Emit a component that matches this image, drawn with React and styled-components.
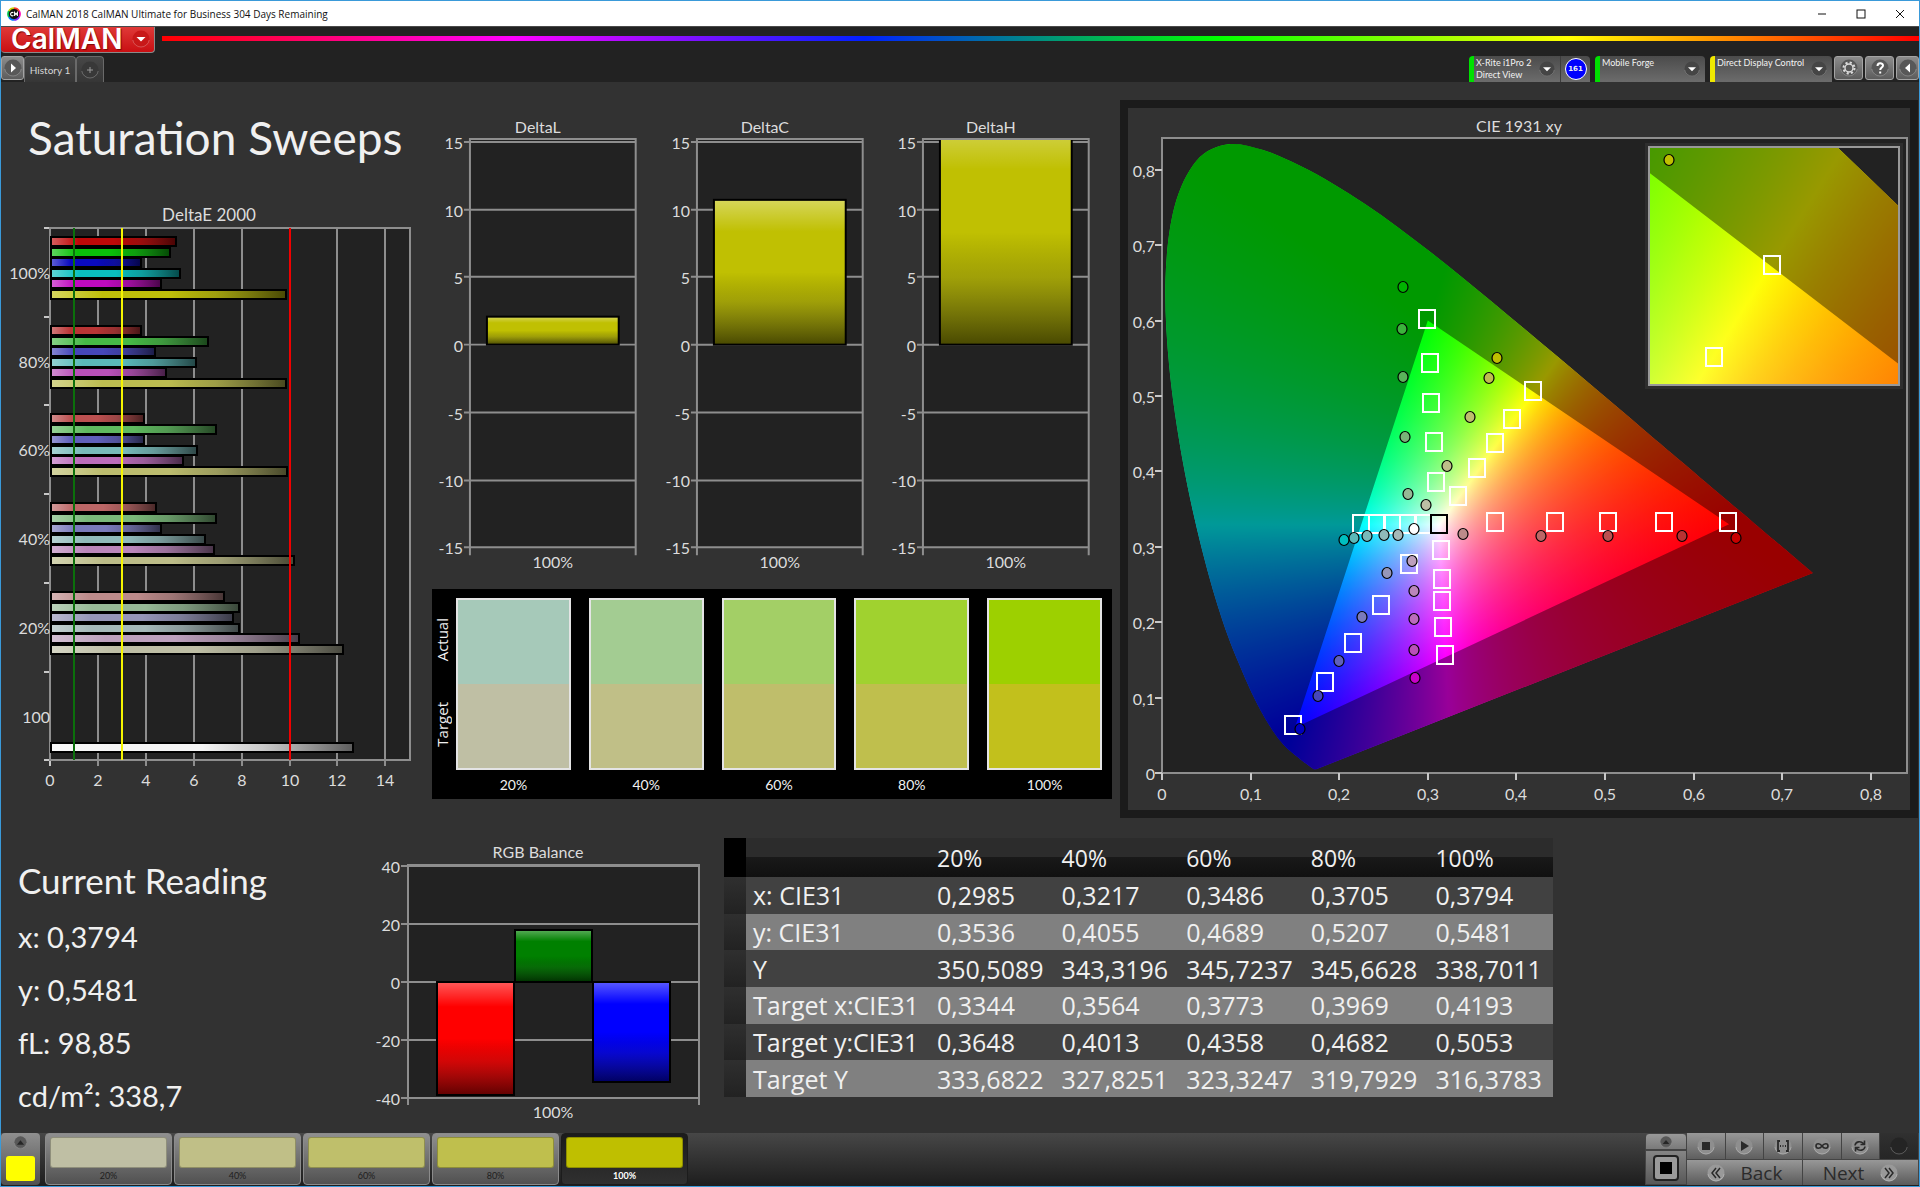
import styled, { createGlobalStyle } from 'styled-components';

const GlobalStyle = createGlobalStyle`
  * {
    box-sizing: border-box;
  }

  body {
    margin: 0;
    background: #323232;
    color: #f0f0f0;
    font-family: Lato, "Liberation Sans", sans-serif;
  }

  button {
    margin: 0;
    padding: 0;
    border: none;
    font-family: inherit;
    color: inherit;
  }
`;

const Window = styled.div`
  min-height: 100vh;
  display: flex;
  flex-direction: column;
  border: 1px solid #3a9ad9;
  background: #323232;
`;

/* ---------- title bar ---------- */

const TitleBar = styled.header`
  height: 25px;
  padding-left: 6px;
  display: flex;
  align-items: center;
  background: #ffffff;
  color: #111111;

  h1 {
    margin: 0 0 0 5px;
    flex: 1;
    font: 10px "Open Sans", "Noto Sans", sans-serif;
  }
`;

const WindowButton = styled.button`
  width: 39px;
  height: 24px;
  background: none;
  display: grid;
  place-items: center;
`;

/* ---------- application header ---------- */

const AppHeader = styled.div`
  height: 56px;
  background: #222222;
  border-top: 1px solid #4a4a4a;
`;

const BrandRow = styled.div`
  height: 29px;
  display: flex;
  gap: 7px;
`;

const BrandButton = styled.button`
  width: 154px;
  height: 26px;
  padding: 0 4px 2px 10px;
  display: flex;
  align-items: center;
  justify-content: space-between;
  border-bottom: 1px solid #8a8a8a;
  border-right: 1px solid #8a8a8a;
  border-radius: 0 0 4px 4px;
  background: linear-gradient(#e03a38, #c90f12);
  color: #ffffff;
  font: 600 28px/22px Inter, sans-serif;
  text-shadow: 1px 1px 1px #7a0808;
`;

const Spectrum = styled.div`
  flex: 1;
  height: 5px;
  margin-top: 9px;
  background: linear-gradient(
    to right,
    #ff0000, #ff00ff 20%, #0020ff 40%, #00ff00 60%, #ffff00 80%, #ff0000
  );
`;

const TabRow = styled.div`
  height: 26px;
  display: flex;
  justify-content: space-between;
`;

const TabGroup = styled.div`
  display: flex;
  align-items: flex-start;
  gap: ${(props) => props.$gap}px;
`;

const Tab = styled.button`
  height: 26px;
  width: ${(props) => props.$width}px;
  display: grid;
  place-items: center;
  border: 1px solid #6a6a6a;
  border-bottom: none;
  border-radius: 4px 4px 0 0;
  background: linear-gradient(#474747, #363636);
  color: #d6d6d6;
  font-size: 10px;
`;

const ToolButton = styled.button`
  width: ${(props) => props.$width}px;
  height: 24px;
  display: grid;
  place-items: center;
  border: 1px solid #a4a4a4;
  border-radius: 3px;
  background: linear-gradient(#8c8c8c, #5c5c5c);
`;

const DeviceTab = styled.div`
  height: 26px;
  width: ${(props) => props.$width}px;
  display: flex;
  border-left: 5px solid ${(props) => props.$status};
  border-radius: 4px 4px 0 0;
  background: linear-gradient(#4b4b4b, #6c6c6c);

  & + & {
    margin-left: 3px;
  }
`;

const DeviceButton = styled.button`
  flex: 1;
  padding: 1px 5px 0 2px;
  display: flex;
  justify-content: space-between;
  background: none;
  color: #f2f2f2;
  font-size: 9px;
  line-height: 12px;
  text-align: left;
  white-space: nowrap;

  svg {
    margin-top: 4px;
  }
`;

const ReadingCount = styled.span`
  width: 30px;
  display: grid;
  place-items: center;
  border-left: 1px solid #3c3c3c;

  b {
    width: 22px;
    height: 22px;
    border: 1px solid #ffffff;
    border-radius: 50%;
    background: #0000ff;
    font: bold 7px/20px "DejaVu Sans", sans-serif;
    text-align: center;
  }
`;

/* ---------- workspace ---------- */

const Workspace = styled.main`
  flex: 1;
  padding-top: 18px;
`;

const UpperRow = styled.div`
  display: grid;
  grid-template-columns: 431fr 680fr 807fr;
`;

const LowerRow = styled.div`
  margin-top: 20px;
  display: grid;
  grid-template-columns: 370fr 353fr 829fr 366fr;
`;

const PageTitle = styled.h2`
  margin: 0;
  padding: 7px 0 0 27px;
  height: 98px;
  font-size: 46px;
  line-height: 62px;
  font-weight: normal;
`;

const Chart = styled.svg`
  display: block;
  width: 100%;
  height: auto;
  font-family: Lato, sans-serif;
  font-size: 16px;
  fill: #dcdcdc;
`;

const DeltaCharts = styled.div`
  display: grid;
  grid-template-columns: repeat(3, 1fr);
`;

const SwatchPanel = styled.section`
  padding: 9px 10px 0 0;
  display: flex;
  background: #000000;
`;

const SwatchAxis = styled.div`
  width: 24px;
  height: 172px;
  padding: 0 4px 4px 0;
  display: flex;
  flex-direction: column;
  justify-content: space-around;
  align-items: center;
  font: 15px/18px "Open Sans", "Noto Sans", sans-serif;

  span {
    writing-mode: vertical-rl;
    transform: rotate(180deg);
  }
`;

const SwatchList = styled.div`
  flex: 1;
  display: grid;
  grid-template-columns: repeat(5, 1fr);
  gap: 18px;
`;

const SwatchFigure = styled.figure`
  margin: 0;
  text-align: center;
  font-size: 14px;
  line-height: 29px;
`;

const SwatchColor = styled.div`
  height: 172px;
  border: 2px solid #e4e4e4;
  background: linear-gradient(
    ${(props) => props.$actual} 50%,
    ${(props) => props.$target} 50%
  );
`;

const CiePanel = styled.section`
  margin: 0 1px 0 8px;
  border: 8px solid #1b1b1b;
`;

const GamutField = styled.div`
  width: 100%;
  height: 100%;
  background: ${(props) => props.$layers};
  background-blend-mode: darken;
`;

const Reading = styled.section`
  padding: 20px 0 0 17px;
  font-size: 29px;

  h3 {
    margin: 0 0 8px;
    font-size: 35px;
    line-height: 44px;
    font-weight: normal;
  }

  p {
    margin: 0;
    line-height: 53px;
  }
`;

const DataTable = styled.table`
  width: 100%;
  height: 259px;
  align-self: start;
  table-layout: fixed;
  border-collapse: collapse;
  font: 25px/36px "Open Sans", "Noto Sans", sans-serif;
  white-space: nowrap;

  th,
  td {
    padding: 0 0 0 7px;
    text-align: left;
    font-weight: normal;
  }

  thead th {
    height: 39px;
    font-size: 23px;
    background: linear-gradient(#2c2c2c 48%, #191919 50%, #101010);
  }

  thead th:first-child {
    background: #000000;
  }

  tbody tr {
    background: #414141;
  }

  tbody tr:nth-child(even) {
    background: #808080;
  }

  tbody td:first-child {
    background: linear-gradient(#2f2f2f, #222222);
  }
`;

/* ---------- footer ---------- */

const Footer = styled.footer`
  height: 53px;
  display: flex;
  background: linear-gradient(#474747, #1d1d1d);
`;

const ColorPick = styled.button`
  width: 39px;
  height: 52px;
  margin-right: 5px;
  padding: 3px 5px 4px;
  display: flex;
  flex-direction: column;
  align-items: center;
  justify-content: space-between;
  border-radius: 4px;
  background: linear-gradient(#8f8f8f, #505050);

  span {
    width: 29px;
    height: 25px;
    border-radius: 3px;
    background: #ffff00;
  }
`;

const PatternList = styled.div`
  flex: 1;
  display: flex;
  gap: 2px;
`;

const PatternButton = styled.button`
  width: 127px;
  height: 52px;
  padding: 3px 4px 0;
  border-radius: 4px;
  border: 1px solid ${(props) => (props.$active ? '#1c1c1c' : '#8b8b8b')};
  background: ${(props) => (props.$active
    ? 'linear-gradient(#1b1b1b, #303030)'
    : 'linear-gradient(#8f8f8f, #515151)')};
  color: ${(props) => (props.$active ? '#ffffff' : '#1e1e1e')};
  font-size: 9px;
  line-height: 16px;
  font-weight: ${(props) => (props.$active ? 'bold' : 'normal')};
`;

const PatternColor = styled.span`
  display: block;
  height: 31px;
  border-radius: 3px;
  border: 1px solid rgba(0, 0, 0, .25);
  background: ${(props) => props.$color};
`;

const PatternWindow = styled.div`
  width: 42px;
  display: flex;
  flex-direction: column;

  button {
    display: grid;
    place-items: center;
    border: 1px solid #444444;
    background: linear-gradient(#999999, #7a7a7a);
  }

  button:first-child {
    height: 17px;
    border-radius: 4px 4px 0 0;
  }

  button:last-child {
    height: 35px;
    background: linear-gradient(#858585, #585858);
  }
`;

const Transport = styled.div`
  width: 232px;
  display: grid;
  grid-template-columns: repeat(6, 1fr);
  grid-template-rows: 27px 25px;
`;

const TransportButton = styled.button`
  display: grid;
  place-items: center;
  border-right: 1px solid #444444;
  border-bottom: 1px solid #444444;
  background: ${(props) => (props.disabled
    ? 'linear-gradient(#303030, #262626)'
    : 'linear-gradient(#989898, #5f5f5f)')};
`;

const StepButton = styled.button`
  grid-column: span 3;
  display: flex;
  align-items: center;
  justify-content: center;
  gap: 16px;
  border-right: 1px solid #444444;
  background: linear-gradient(#989898, #5a5a5a);
  color: #2b2b2b;
  font: 19px/24px "Open Sans", "Noto Sans", sans-serif;
`;

/* ---------- icons ---------- */

function AppIcon() {
  return (
    <svg width="14" height="14" viewBox="0 0 14 14" aria-hidden="true">
      <circle cx="7" cy="7" r="6" fill="#111111" />
      <g fill="none" strokeWidth="1.6">
        <path d="M7 1A6 6 0 0 1 12.2 4" stroke="#ff3b30" />
        <path d="M12.2 4A6 6 0 0 1 12.2 10" stroke="#ff00b8" />
        <path d="M12.2 10A6 6 0 0 1 7 13" stroke="#7a2bff" />
        <path d="M7 13A6 6 0 0 1 1.8 10" stroke="#007bff" />
        <path d="M1.8 10A6 6 0 0 1 1.8 4" stroke="#00c853" />
        <path d="M1.8 4A6 6 0 0 1 7 1" stroke="#c6d800" />
        <path d="M6.4 5.8A1.7 1.7 0 1 0 6.4 8.4M7.6 9V5.6L9 7.6L10.4 5.6V9" stroke="#ffffff" strokeWidth="1.1" />
      </g>
    </svg>
  );
}

function RoundIcon({ size = 18, fill = '#585858', children }) {
  return (
    <svg width={size} height={size} viewBox="0 0 18 18" aria-hidden="true">
      <circle cx="9" cy="9" r="8.5" fill={fill} />
      <path d="M.8 10A8.3 8.3 0 0 0 17.2 10" fill="none" stroke="#ffffff" strokeOpacity=".25" />
      {children}
    </svg>
  );
}

const arrowDown = <path d="M4.500 7H13.500L9 11.500Z" fill="#ffffff" />;

/* ---------- chart helpers ---------- */

const GRID = '#8e8e8e';

function BarShading() {
  return (
    <defs>
      {[['shadeAcross', 1, 0], ['shadeDown', 0, 1]].map(([id, x2, y2]) => (
        <linearGradient key={id} id={id} x1="0" y1="0" x2={x2} y2={y2}>
          <stop offset="0" stopColor="#ffffff" stopOpacity=".35" />
          <stop offset=".22" stopColor="#ffffff" stopOpacity="0" />
          <stop offset=".5" stopColor="#000000" stopOpacity="0" />
          <stop offset=".7" stopColor="#202020" stopOpacity=".2" />
          <stop offset="1" stopColor="#000000" stopOpacity=".62" />
        </linearGradient>
      ))}
    </defs>
  );
}

function Bar({ x, y, width, height, color, shade }) {
  const box = { x, y, width, height };
  return (
    <>
      <rect {...box} fill={color} />
      <rect {...box} fill={`url(#${shade})`} stroke="#000000" strokeWidth="2" />
    </>
  );
}

/* ---------- DeltaE 2000 ---------- */

const DELTA_E = [
  {
    label: '100%',
    values: [5.26, 4.99, 3.78, 5.41, 4.62, 9.87],
    colors: ['#bf0808', '#0abf0a', '#0a0abf', '#0abfbf', '#bf0abf', '#bfbf0a'],
  },
  {
    label: '80%',
    values: [3.78, 6.58, 4.38, 6.08, 4.85, 9.87],
    colors: ['#b93535', '#46b946', '#4646b9', '#5ab9b9', '#b950b9', '#bcbc50'],
  },
  {
    label: '60%',
    values: [3.92, 6.92, 3.92, 6.12, 5.54, 9.90],
    colors: ['#bc5050', '#5fb95f', '#6060bb', '#78baba', '#bb6cbb', '#bcbc6e'],
  },
  {
    label: '40%',
    values: [4.42, 6.92, 4.62, 6.47, 6.85, 10.20],
    colors: ['#bc6666', '#7ab97a', '#7a7abb', '#90baba', '#bb86bb', '#bcbc88'],
  },
  {
    label: '20%',
    values: [7.25, 7.89, 7.64, 7.88, 10.39, 12.22],
    colors: ['#bc8a8a', '#96b996', '#9696b9', '#a5b9b9', '#bda0bd', '#bebea5'],
  },
  { label: '100', values: [12.66], colors: ['#f4f4f4'] },
];

const LIMITS = [[1, '#0b700b'], [3, '#f5f500'], [10, '#f00000']];

function DeltaEChart() {
  const toX = (value) => Math.round(49 + value * 23.95);
  const bandTop = (index) => Math.round(30 + index * 88.7);

  return (
    <Chart viewBox="0 0 431 600" role="img" aria-label="DeltaE 2000">
      <BarShading />
      <text x="208" y="23" textAnchor="middle" fontSize="17">DeltaE 2000</text>
      <rect x="49" y="30" width="360" height="532" fill="#222222" />
      <g stroke={GRID} strokeWidth="2">
        {[2, 4, 6, 8, 10, 12, 14].map((value) => (
          <path key={value} d={`M${toX(value)} 30V568`} />
        ))}
        {[0, 1, 2, 3, 4, 5, 6].map((index) => (
          <path key={index} d={`M43 ${bandTop(index)}H49`} stroke="#c8c8c8" />
        ))}
        <path d="M49 562V568" stroke="#c8c8c8" />
        <rect x="49" y="30" width="360" height="532" fill="none" />
      </g>
      {DELTA_E.map(({ label, values, colors }, index) => (
        <g key={label}>
          <text x="49" y={bandTop(index) + 51} textAnchor="end">{label}</text>
          {values.map((value, bar) => (
            <Bar
              key={colors[bar]}
              x={50}
              y={bandTop(index) + (values.length === 1 ? 71 : 9) + Math.round(bar * 10.5)}
              width={toX(value) - 50}
              height={9}
              color={colors[bar]}
              shade="shadeAcross"
            />
          ))}
        </g>
      ))}
      {LIMITS.map(([value, color]) => (
        <path key={value} d={`M${toX(value)} 30V562`} stroke={color} strokeWidth="2" />
      ))}
      {[0, 2, 4, 6, 8, 10, 12, 14].map((value) => (
        <text key={value} x={toX(value)} y="588" textAnchor="middle">{value}</text>
      ))}
    </Chart>
  );
}

/* ---------- DeltaL / DeltaC / DeltaH ---------- */

function DeltaChart({ name, value }) {
  const toY = (level) => Math.round(245 - level * 13.55);
  const top = Math.max(toY(value), 20);

  return (
    <Chart viewBox="0 0 227 490" role="img" aria-label={name}>
      <text x="106" y="33" textAnchor="middle">{name}</text>
      <rect x="38" y="39" width="166" height="409" fill="#222222" />
      <g stroke={GRID} strokeWidth="2">
        {[15, 10, 5, 0, -5, -10, -15].map((level) => (
          <path key={level} d={`M32 ${toY(level)}H204`} />
        ))}
        <path d="M38 456V39H204V456" fill="none" />
      </g>
      {[15, 10, 5, 0, -5, -10, -15].map((level) => (
        <text key={level} x="31" y={toY(level) + 7} textAnchor="end">{level}</text>
      ))}
      <clipPath id={`clip${name}`}>
        <rect x="38" y="40" width="166" height="408" />
      </clipPath>
      <g clipPath={`url(#clip${name})`}>
        <Bar x={55} y={top} width={132} height={245 - top} color="#c0c002" shade="shadeDown" />
      </g>
      <text x="121" y="469" textAnchor="middle">100%</text>
    </Chart>
  );
}

/* ---------- RGB balance ---------- */

const BALANCE = [
  { color: '#ff0000', x: 66, from: 144, to: 257 },
  { color: '#008000', x: 144, from: 92, to: 144 },
  { color: '#0000ff', x: 222, from: 144, to: 244 },
];

function RgbBalanceChart() {
  const toY = (level) => Math.round(144 - level * 2.9);

  return (
    <Chart viewBox="0 0 353 290" role="img" aria-label="RGB Balance">
      <text x="167" y="20" textAnchor="middle">RGB Balance</text>
      <rect x="37" y="27" width="291" height="233" fill="#222222" />
      <g stroke={GRID} strokeWidth="2">
        {[40, 20, 0, -20, -40].map((level) => (
          <path key={level} d={`M30 ${toY(level)}H328`} />
        ))}
        <path d="M37 267V27H328V267" fill="none" />
      </g>
      {[40, 20, 0, -20, -40].map((level) => (
        <text key={level} x="29" y={toY(level) + 7} textAnchor="end">{level}</text>
      ))}
      {BALANCE.map(({ color, x, from, to }) => (
        <Bar key={color} x={x} y={from} width={77} height={to - from} color={color} shade="shadeDown" />
      ))}
      <text x="182" y="280" textAnchor="middle">100%</text>
    </Chart>
  );
}

/* ---------- CIE 1931 ---------- */

const PRIMARIES = [[0.64, 0.33], [0.3, 0.6], [0.15, 0.06]];

const LOCUS = [
  [0.1741, 0.005], [0.1714, 0.0051], [0.1689, 0.0069], [0.1644, 0.0109],
  [0.1566, 0.0177], [0.144, 0.0297], [0.1355, 0.0399], [0.1241, 0.0578],
  [0.1096, 0.0868], [0.0913, 0.1327], [0.0687, 0.2007], [0.0454, 0.295],
  [0.0235, 0.4127], [0.0082, 0.5384], [0.0039, 0.6548], [0.0139, 0.7502],
  [0.0389, 0.812], [0.0743, 0.8338], [0.1142, 0.8262], [0.1547, 0.8059],
  [0.1929, 0.7816], [0.2296, 0.7543], [0.2658, 0.7243], [0.3016, 0.6923],
  [0.3373, 0.6589], [0.3731, 0.6245], [0.4087, 0.5896], [0.4441, 0.5547],
  [0.4788, 0.5202], [0.5125, 0.4866], [0.5448, 0.4544], [0.5752, 0.4242],
  [0.627, 0.3725], [0.6658, 0.334], [0.6915, 0.3083], [0.719, 0.2809],
  [0.7347, 0.2653],
];

const toLinearRgb = (x, y, z) => [
  3.2406 * x - 1.5372 * y - 0.4986 * z,
  -0.9689 * x + 1.8758 * y + 0.0415 * z,
  0.0557 * x - 0.204 * y + 1.057 * z,
];

const toByte = (value) => Math.round(255 * Math.max(value, 0));

// Along any ray from one primary the ratio of the two other channels is
// constant, so each primary gives one conic gradient. The darkest value of the
// three per channel is the colour scaled to full brightness.
function gamutLayers(view) {
  return PRIMARIES.map(([px, py], primary) => {
    const stops = [];
    for (let angle = 0; angle <= 360; angle += 0.5) {
      const theta = (angle * Math.PI) / 180;
      const dx = Math.sin(theta) / view.scaleX;
      const dy = Math.cos(theta) / view.scaleY;
      const rgb = toLinearRgb(dx, dy, -dx - dy);
      rgb[primary] = 0;
      const peak = Math.max(...rgb);
      const color = rgb.map((value) => (peak > 0 ? toByte(value / peak) : 0));
      color[primary] = 255;
      stops.push(`rgb(${color.join(',')}) ${angle}deg`);
    }
    const at = `${view.x(px) - view.left}px ${view.y(py) - view.top}px`;
    return `conic-gradient(at ${at}, ${stops.join(',')})`;
  }).join(',');
}

function smoothPath(points) {
  let path = `M${points[0]}`;
  for (let i = 0; i < points.length - 1; i += 1) {
    const before = points[Math.max(i - 1, 0)];
    const start = points[i];
    const end = points[i + 1];
    const after = points[Math.min(i + 2, points.length - 1)];
    const c1 = [start[0] + (end[0] - before[0]) / 6, start[1] + (end[1] - before[1]) / 6];
    const c2 = [end[0] - (after[0] - start[0]) / 6, end[1] - (after[1] - start[1]) / 6];
    path += `C${c1} ${c2} ${end}`;
  }
  return `${path}Z`;
}

const makeView = (left, top, width, height, originX, originY, scaleX, scaleY) => ({
  left,
  top,
  width,
  height,
  scaleX,
  scaleY,
  x: (value) => originX + value * scaleX,
  y: (value) => originY - value * scaleY,
});

const MAIN_VIEW = makeView(34, 30, 745, 635, 34, 665, 886, 754);
const ZOOM_VIEW = makeView(522, 40, 248, 236, 643 - 0.4193 * 2550, 158 + 0.5053 * 2465, 2550, 2465);

function Gamut({ id, view }) {
  const locus = smoothPath(LOCUS.map(([x, y]) => [view.x(x), view.y(y)]));
  const triangle = `M${PRIMARIES.map(([x, y]) => `${view.x(x)} ${view.y(y)}`).join('L')}Z`;

  return (
    <>
      <clipPath id={`${id}Plot`}>
        <rect x={view.left} y={view.top} width={view.width} height={view.height} />
      </clipPath>
      <clipPath id={`${id}Locus`}>
        <path d={locus} />
      </clipPath>
      <g clipPath={`url(#${id}Plot)`}>
        <g clipPath={`url(#${id}Locus)`}>
          <foreignObject x={view.left} y={view.top} width={view.width} height={view.height}>
            <GamutField $layers={gamutLayers(view)} />
          </foreignObject>
          <path d={`${locus}${triangle}`} fill="#000000" fillOpacity=".4" fillRule="evenodd" />
        </g>
      </g>
    </>
  );
}

const TARGETS = [
  [299, 211], [302, 255], [303, 295], [306, 334], [308, 374],
  [405, 283], [384, 311], [367, 335], [349, 360], [330, 388],
  [367, 414], [427, 414], [480, 414], [536, 414], [600, 414],
  [233, 416], [249, 416], [264, 416], [280, 416], [295, 416],
  [313, 442], [314, 471], [314, 493], [315, 519], [317, 547],
  [281, 456], [253, 497], [225, 535], [197, 574], [165, 617],
];

const MEASURED = [
  [275, 179, '#00b400'], [274, 221, '#3cb43c'], [275, 269, '#5ab45a'], [277, 329, '#78b478'], [280, 386, '#96b996'],
  [369, 250, '#bfbf00'], [361, 270, '#bebe50'], [342, 309, '#bebe6e'], [319, 358, '#bebe88'], [298, 397, '#bebea5'],
  [335, 426, '#bc8a8a'], [413, 428, '#bc6666'], [480, 428, '#bc5050'], [554, 428, '#b93232'], [608, 430, '#c80000'],
  [216, 432, '#00bfbf'], [226, 430, '#5ab9b9'], [239, 428, '#78baba'], [256, 427, '#90baba'], [270, 427, '#a5b9b9'],
  [284, 453, '#bda0bd'], [286, 483, '#bb86bb'], [286, 511, '#bb6cbb'], [286, 542, '#b950b9'], [287, 570, '#c800c8'],
  [259, 465, '#9696b9'], [234, 509, '#7a7abb'], [211, 553, '#6060bb'], [190, 588, '#4646b9'], [172, 621, '#0000bf'],
  [286, 421, '#ffffff'],
];

function Target({ x, y, color = '#ffffff' }) {
  return <rect x={x - 8} y={y - 9} width="16" height="18" fill="none" stroke={color} strokeWidth="2" />;
}

function Measured({ x, y, color }) {
  return <ellipse cx={x} cy={y} rx="5" ry="5.500" fill={color} stroke="#000000" strokeWidth="1.200" />;
}

const decimal = (value) => (value === 0 ? '0' : String(value / 10).replace('.', ','));

function CieChart() {
  const levels = [0, 1, 2, 3, 4, 5, 6, 7, 8];

  return (
    <Chart viewBox="0 0 782 702" role="img" aria-label="CIE 1931 xy">
      <text x="391" y="24" textAnchor="middle">CIE 1931 xy</text>
      <rect x="34" y="30" width="745" height="635" fill="#222222" />
      <Gamut id="main" view={MAIN_VIEW} />
      <rect x="34" y="30" width="745" height="635" fill="none" stroke={GRID} strokeWidth="2" />
      <g stroke="#c8c8c8" strokeWidth="2">
        {levels.map((level) => (
          <path
            key={level}
            d={`M${Math.round(MAIN_VIEW.x(level / 10))} 665V672M27 ${Math.round(MAIN_VIEW.y(level / 10))}H34`}
          />
        ))}
      </g>
      {levels.map((level) => (
        <g key={level}>
          <text x={Math.round(MAIN_VIEW.x(level / 10))} y="692" textAnchor="middle">{decimal(level)}</text>
          <text x="27" y={Math.round(MAIN_VIEW.y(level / 10)) + 7} textAnchor="end">{decimal(level)}</text>
        </g>
      ))}
      {TARGETS.map(([x, y]) => <Target key={`${x} ${y}`} x={x} y={y} />)}
      <Target x={311} y={416} color="#000000" />
      {MEASURED.map(([x, y, color]) => <Measured key={color + y} x={x} y={y} color={color} />)}
      <rect x="517" y="35" width="258" height="246" fill="#2e2e2e" />
      <rect x="522" y="40" width="248" height="236" fill="#222222" />
      <Gamut id="zoom" view={ZOOM_VIEW} />
      <rect x="521" y="39" width="250" height="238" fill="none" stroke="#999999" strokeWidth="2" />
      <Measured x={541} y={52} color="#c0c000" />
      <Target x={644} y={157} />
      <Target x={586} y={249} />
    </Chart>
  );
}

/* ---------- data ---------- */

const SWATCHES = [
  { label: '20%', actual: '#a6c9b9', target: '#bfbfa4' },
  { label: '40%', actual: '#a3cc92', target: '#c0bf87' },
  { label: '60%', actual: '#a3cf66', target: '#bfbe6b' },
  { label: '80%', actual: '#a0d22f', target: '#bfbf4d' },
  { label: '100%', actual: '#9dd000', target: '#c2c01c' },
];

const PATTERNS = [
  ['20%', '#bfbfa4'], ['40%', '#c0bf87'], ['60%', '#bfbf6b'],
  ['80%', '#bfbf4d'], ['100%', '#bfbf00'],
];

const ROWS = [
  ['x: CIE31', '0,2985', '0,3217', '0,3486', '0,3705', '0,3794'],
  ['y: CIE31', '0,3536', '0,4055', '0,4689', '0,5207', '0,5481'],
  ['Y', '350,5089', '343,3196', '345,7237', '345,6628', '338,7011'],
  ['Target x:CIE31', '0,3344', '0,3564', '0,3773', '0,3969', '0,4193'],
  ['Target y:CIE31', '0,3648', '0,4013', '0,4358', '0,4682', '0,5053'],
  ['Target Y', '333,6822', '327,8251', '323,3247', '319,7929', '316,3783'],
];

const DEVICES = [
  { name: ['X-Rite i1Pro 2', 'Direct View'], status: '#00e000', width: 121, count: 161 },
  { name: ['Mobile Forge'], status: '#00e000', width: 110 },
  { name: ['Direct Display Control'], status: '#f0e800', width: 122 },
];

const TRANSPORT = [
  ['Stop', <path key="i" d="M5 5H13V13H5Z" fill="#2a2a2a" />],
  ['Play', <path key="i" d="M6 4L14 9L6 14Z" fill="#2a2a2a" />],
  ['Range', <path key="i" d="M6 4H4V14H6M12 4H14V14H12M6 9H7M8.500 9H9.500M11 9H12" fill="none" stroke="#2a2a2a" strokeWidth="1.800" />],
  ['Continuous', <path key="i" d="M9 9C7 6 3 6 3 9S7 12 9 9S15 6 15 9S11 12 9 9Z" fill="none" stroke="#2a2a2a" strokeWidth="1.600" />],
  ['Refresh', <path key="i" d="M4 8.500C4.500 4.500 9.500 3.500 12.500 6.500M13.500 3.500V7.500H9.500M14 9.500C13.500 13.500 8.500 14.500 5.500 11.500M4.500 14.500V10.500H8.500" fill="none" stroke="#2a2a2a" strokeWidth="1.600" />],
];

/* ---------- page sections ---------- */

function Header() {
  return (
    <>
      <TitleBar>
        <AppIcon />
        <h1>CalMAN 2018 CalMAN Ultimate for Business 304 Days Remaining</h1>
        <WindowButton type="button" aria-label="Minimize">
          <svg width="10" height="10"><path d="M1 5H9" stroke="#111111" /></svg>
        </WindowButton>
        <WindowButton type="button" aria-label="Maximize">
          <svg width="10" height="10"><rect x="1" y="1" width="8" height="8" fill="none" stroke="#111111" /></svg>
        </WindowButton>
        <WindowButton type="button" aria-label="Close">
          <svg width="10" height="10"><path d="M1 1L9 9M9 1L1 9" stroke="#111111" /></svg>
        </WindowButton>
      </TitleBar>
      <AppHeader>
        <BrandRow>
          <BrandButton type="button">
            CalMAN
            <RoundIcon fill="#c81818">{arrowDown}</RoundIcon>
          </BrandButton>
          <Spectrum />
        </BrandRow>
        <TabRow>
          <TabGroup $gap={0}>
            <ToolButton type="button" $width={23} aria-label="Show panel">
              <RoundIcon><path d="M7 4.500L12 9L7 13.500Z" fill="#ffffff" /></RoundIcon>
            </ToolButton>
            <Tab type="button" $width={52}>History 1</Tab>
            <Tab type="button" $width={28} aria-label="Add tab">
              <RoundIcon fill="#383838"><path d="M6 9H12M9 6V12" stroke="#9a9a9a" /></RoundIcon>
            </Tab>
          </TabGroup>
          <TabGroup $gap={2}>
            {DEVICES.map(({ name, status, width, count }) => (
              <DeviceTab key={name[0]} $width={width} $status={status}>
                <DeviceButton type="button">
                  <span>
                    {name[0]}
                    <br />
                    {name[1]}
                  </span>
                  <RoundIcon size={16} fill="#454545">{arrowDown}</RoundIcon>
                </DeviceButton>
                {count ? <ReadingCount><b>{count}</b></ReadingCount> : null}
              </DeviceTab>
            ))}
            <ToolButton type="button" $width={29} aria-label="Settings">
              <RoundIcon>
                <circle cx="9" cy="9" r="4" fill="none" stroke="#dcdcdc" strokeWidth="1.400" />
                <circle cx="9" cy="9" r="5.500" fill="none" stroke="#dcdcdc" strokeWidth="2" strokeDasharray="2.160 2.160" />
              </RoundIcon>
            </ToolButton>
            <ToolButton type="button" $width={29} aria-label="Help">
              <RoundIcon>
                <path d="M6.500 7C6.500 3.500 12 3.500 12 6.500C12 8.500 9.200 8.500 9.200 11M9.200 12.500V14.500" fill="none" stroke="#ffffff" strokeWidth="2" />
              </RoundIcon>
            </ToolButton>
            <ToolButton type="button" $width={23} aria-label="Hide panel">
              <RoundIcon><path d="M11 4.500L6 9L11 13.500Z" fill="#ffffff" /></RoundIcon>
            </ToolButton>
          </TabGroup>
        </TabRow>
      </AppHeader>
    </>
  );
}

function Swatches() {
  return (
    <SwatchPanel>
      <SwatchAxis>
        <span>Actual</span>
        <span>Target</span>
      </SwatchAxis>
      <SwatchList>
        {SWATCHES.map(({ label, actual, target }) => (
          <SwatchFigure key={label}>
            <SwatchColor $actual={actual} $target={target} />
            <figcaption>{label}</figcaption>
          </SwatchFigure>
        ))}
      </SwatchList>
    </SwatchPanel>
  );
}

function ReadingsTable() {
  return (
    <DataTable>
      <colgroup>
        <col width="22" />
        <col width="184" />
        <col span="5" />
      </colgroup>
      <thead>
        <tr>
          <th aria-label="Row" />
          <th aria-label="Quantity" />
          {SWATCHES.map(({ label }) => <th key={label} scope="col">{label}</th>)}
        </tr>
      </thead>
      <tbody>
        {ROWS.map(([name, ...values]) => (
          <tr key={name}>
            <td />
            <th scope="row">{name}</th>
            {values.map((value) => <td key={value}>{value}</td>)}
          </tr>
        ))}
      </tbody>
    </DataTable>
  );
}

function PatternBar() {
  return (
    <Footer>
      <ColorPick type="button" aria-label="Current color">
        <RoundIcon size={13}><path d="M4 12L9 6L14 12Z" fill="#262626" /></RoundIcon>
        <span />
      </ColorPick>
      <PatternList>
        {PATTERNS.map(([label, color]) => (
          <PatternButton key={label} type="button" $active={label === '100%'}>
            <PatternColor $color={color} />
            {label}
          </PatternButton>
        ))}
      </PatternList>
      <PatternWindow>
        <button type="button" aria-label="Expand">
          <RoundIcon size={12}><path d="M4 12L9 6L14 12Z" fill="#262626" /></RoundIcon>
        </button>
        <button type="button" aria-label="Pattern window">
          <svg width="28" height="28" viewBox="0 0 28 28">
            <rect x="2" y="2" width="24" height="24" rx="3" fill="#9a9a9a" stroke="#222222" strokeWidth="2" />
            <rect x="8" y="8" width="12" height="12" fill="#000000" />
          </svg>
        </button>
      </PatternWindow>
      <Transport>
        {TRANSPORT.map(([label, icon]) => (
          <TransportButton key={label} type="button" aria-label={label}>
            <RoundIcon fill="#8e8e8e">{icon}</RoundIcon>
          </TransportButton>
        ))}
        <TransportButton type="button" disabled aria-label="Record">
          <RoundIcon fill="#242424" />
        </TransportButton>
        <StepButton type="button">
          <RoundIcon fill="#999999">
            <path d="M9 4L5 9L9 14M13 4L9 9L13 14" fill="none" stroke="#2a2a2a" strokeWidth="1.500" />
          </RoundIcon>
          Back
        </StepButton>
        <StepButton type="button">
          Next
          <RoundIcon fill="#999999">
            <path d="M5 4L9 9L5 14M9 4L13 9L9 14" fill="none" stroke="#2a2a2a" strokeWidth="1.500" />
          </RoundIcon>
        </StepButton>
      </Transport>
    </Footer>
  );
}

export default function App() {
  return (
    <Window>
      <GlobalStyle />
      <Header />
      <Workspace>
        <UpperRow>
          <section>
            <PageTitle>Saturation Sweeps</PageTitle>
            <DeltaEChart />
          </section>
          <section>
            <DeltaCharts>
              <DeltaChart name="DeltaL" value={2.1} />
              <DeltaChart name="DeltaC" value={10.7} />
              <DeltaChart name="DeltaH" value={17} />
            </DeltaCharts>
            <Swatches />
          </section>
          <CiePanel>
            <CieChart />
          </CiePanel>
        </UpperRow>
        <LowerRow>
          <Reading>
            <h3>Current Reading</h3>
            <p>x: 0,3794</p>
            <p>y: 0,5481</p>
            <p>fL: 98,85</p>
            <p>cd/m²: 338,7</p>
          </Reading>
          <RgbBalanceChart />
          <ReadingsTable />
        </LowerRow>
      </Workspace>
      <PatternBar />
    </Window>
  );
}
